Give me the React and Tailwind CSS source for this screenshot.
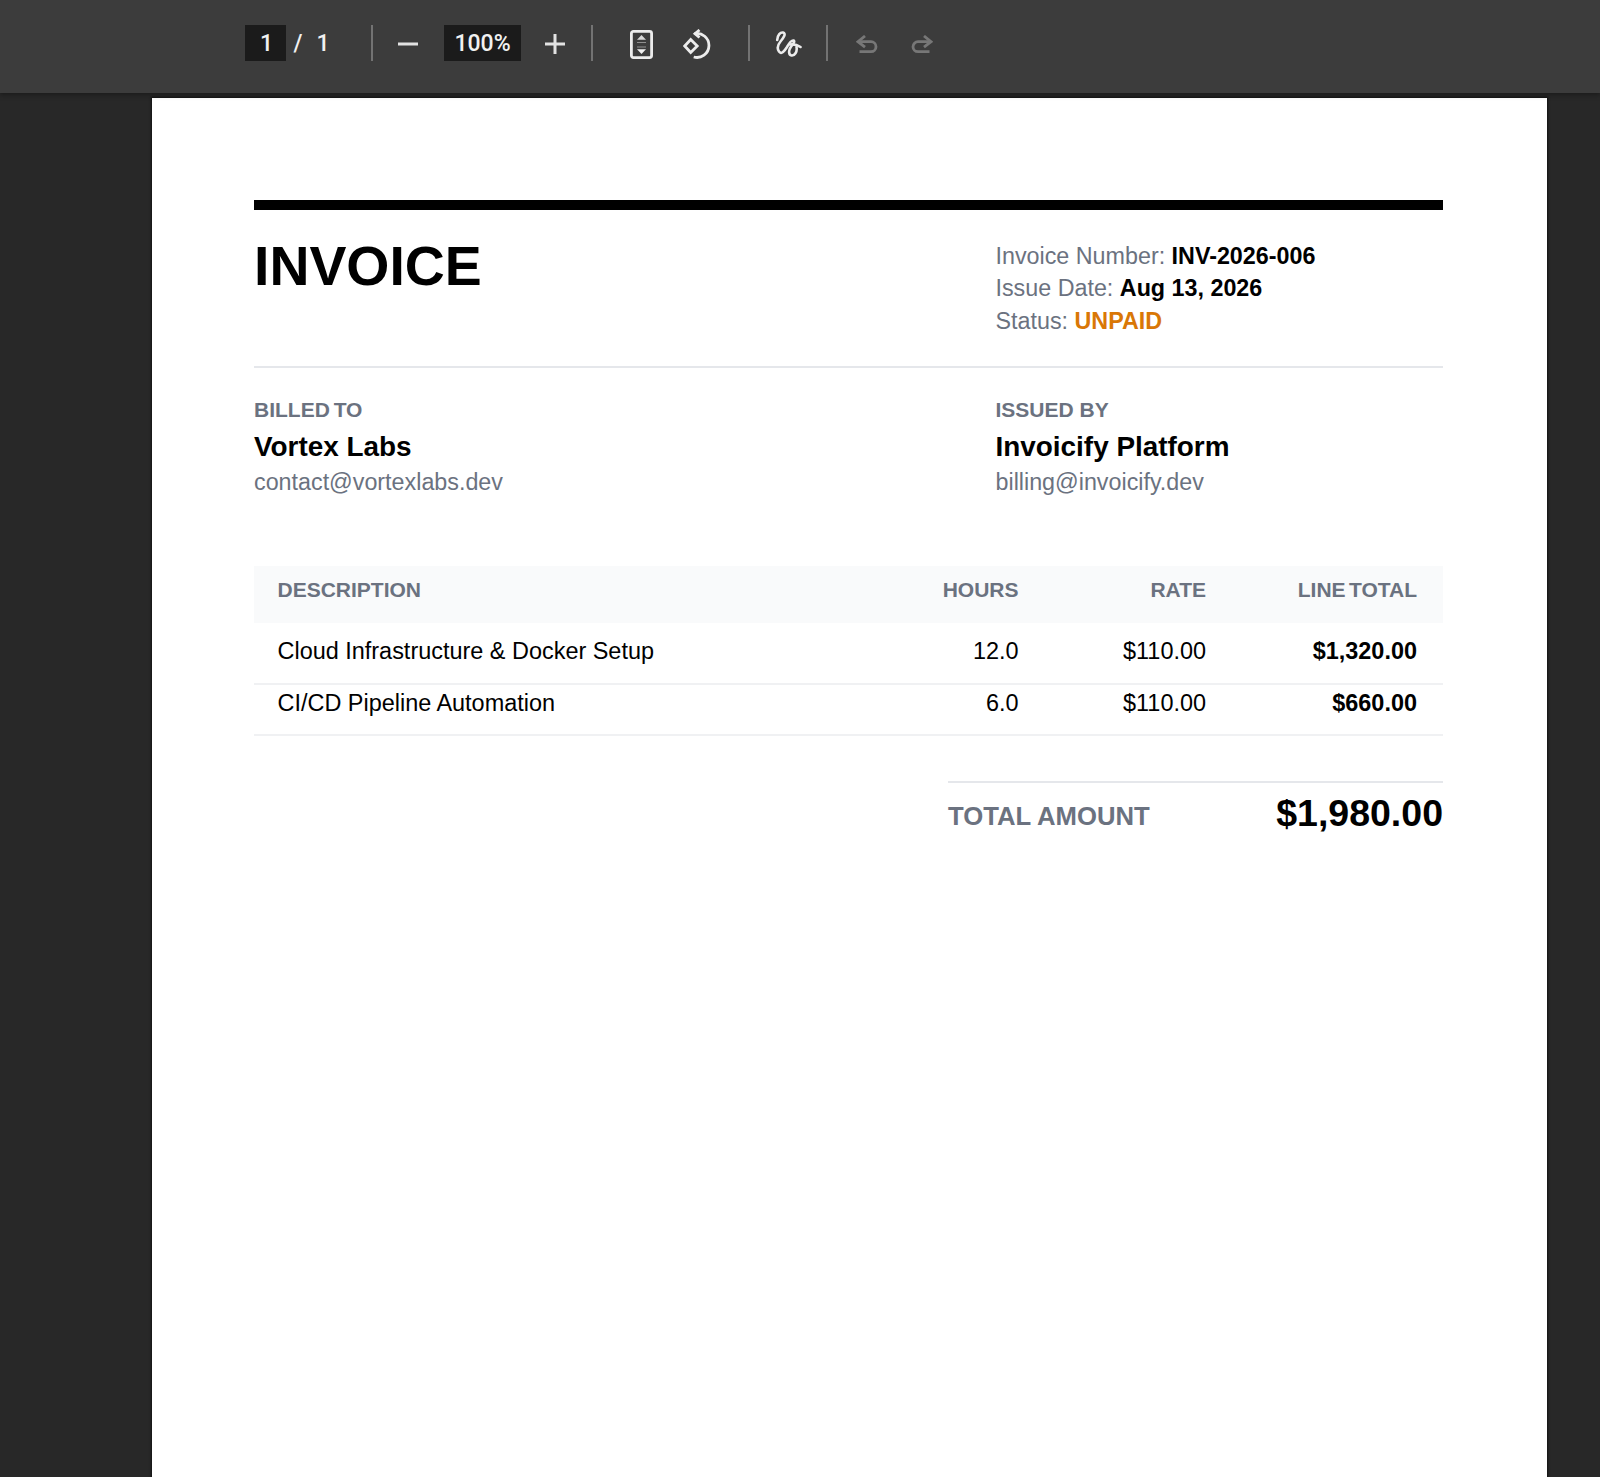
import React from "react";

const Sep = ({ className }) => <div className={`w-[2px] h-[36px] bg-[#737373] ${className}`} />;

const Toolbar = () => {
  return (
    <div className="relative z-10 h-[93px] shrink-0 bg-[#3c3c3c] shadow-[0_2px_5px_rgba(0,0,0,0.35)] flex items-center pb-[7px] pl-[245px] text-[#f1f1f1] font-['Roboto',sans-serif] font-medium text-[23px]">
      <div className="w-[41px] h-[36px] pt-[2px] pl-[2px] bg-[#1b1b1b] flex items-center justify-center">1</div>
      <span className="ml-[6px] w-[12px] pt-[2px] text-center">/</span>
      <span className="ml-[11px] w-[16px] pt-[2px] text-center">1</span>
      <Sep className="ml-[40px]" />

      <svg className="ml-[25px] mt-[2px]" width="20" height="20" viewBox="0 0 20 20">
        <path d="M0 10H20" stroke="#e2e2e2" strokeWidth="3" />
      </svg>
      <div className="ml-[26px] w-[77px] h-[36px] pt-[2px] bg-[#1b1b1b] flex items-center justify-center">100%</div>
      <svg className="ml-[24px] mt-[2px]" width="20" height="20" viewBox="0 0 20 20">
        <path d="M0 10H20M10 0V20" stroke="#e2e2e2" strokeWidth="3" />
      </svg>
      <Sep className="ml-[26px]" />

      {/* fit to page */}
      <svg className="ml-[37px] mt-[2px]" width="23" height="29" viewBox="0 0 23 29" fill="none">
        <rect x="1.4" y="1.4" width="20.2" height="26.2" rx="2" stroke="#ececec" strokeWidth="2.8" />
        <path d="M11.5 5L16 9.8H7Z" fill="#d8d8d8" />
        <path d="M11.5 24L16 19.2H7Z" fill="#f0f0f0" />
        <path d="M7 12.5H16M7 17H16" stroke="#8f8f8f" strokeWidth="1.2" />
      </svg>
      {/* rotate */}
      <svg className="ml-[30px] mt-[2px]" width="31" height="30" viewBox="0 0 31 30" fill="none" stroke="#ececec" strokeWidth="2.8">
        <path d="M7.7 10.5L14.2 17L7.7 23.5L1.7 17Z" />
        <path d="M11.5 4.7A12 12 0 1 1 10.7 28" />
        <path d="M16.5 1L12 4.7L16.5 8.5" />
      </svg>
      <Sep className="ml-[34px]" />

      {/* draw */}
      <svg className="ml-[25px] mt-[2px]" width="27" height="26" viewBox="0 0 26 26" fill="none" stroke="#ececec" strokeWidth="2.6" strokeLinecap="round">
        <path d="M1.7 9C2 4 5 1 7.5 1.5C11 2.5 8 7 5 10.5C2.5 13.5 1 17 3.5 20.5C6 24 9 20 11.5 16C14 11.5 16 9 18 9.5C20 10.5 17 13.5 15 16.5C13 19.5 13 24 16 24.5C19 25 22 21 21 16" />
        <path d="M14.5 13.5C18 13 22 14 25 16" />
      </svg>
      <Sep className="ml-[24px]" />

      {/* undo / redo */}
      <svg className="ml-[28px] mt-[3px]" width="22" height="20" viewBox="0 0 22 20" fill="none" stroke="#777777" strokeWidth="2.8">
        <path d="M9 1L2 6.7L9 12.2" />
        <path d="M2 6.7H15A5 5 0 0 1 15 16.7H3.5" />
      </svg>
      <svg className="ml-[33px] mt-[3px]" width="22" height="20" viewBox="0 0 22 20" fill="none" stroke="#777777" strokeWidth="2.8">
        <path d="M13 1L20 6.7L13 12.2" />
        <path d="M20 6.7H7A5 5 0 0 0 7 16.7H18.5" />
      </svg>
    </div>
  );
};

const rows = [
  { desc: "Cloud Infrastructure & Docker Setup", hours: "12.0", rate: "$110.00", total: "$1,320.00", cls: "pt-[13px] h-[62px]" },
  { desc: "CI/CD Pipeline Automation", hours: "6.0", rate: "$110.00", total: "$660.00", cls: "pt-[3px] h-[51px]" },
];

const App = () => {
  return (
    <div className="h-[1477px] overflow-hidden bg-[#282828] flex flex-col font-['Liberation_Sans',sans-serif]">
      <Toolbar />
      <div className="flex-1 min-h-0 pl-[152px] pr-[53px] pt-[5px]">
        <div className="h-full bg-white pl-[102px] pr-[104px] pt-[102px] text-black shadow-[0_0_2px_1px_#121212]">
          <div className="h-[10px] bg-black" />

          {/* Header */}
          <div className="grid grid-cols-[741.5px_1fr] pt-[30px] pb-[29px] border-b-2 border-[#e5e7eb]">
            <h1 className="text-[55.4px] leading-[52px] font-bold">INVOICE</h1>
            <div className="text-[23.3px] leading-[32.3px] text-[#6b7280]">
              <div>Invoice Number: <b className="text-black">INV-2026-006</b></div>
              <div>Issue Date: <b className="text-black">Aug 13, 2026</b></div>
              <div>Status: <b className="text-[#d97706]">UNPAID</b></div>
            </div>
          </div>

          {/* Parties */}
          <div className="grid grid-cols-[741.5px_1fr] pt-[28px] h-[198px]">
            <div>
              <div className="text-[21px] leading-[28px] font-bold text-[#6b7280] [word-spacing:-2px]">BILLED TO</div>
              <div className="mt-[6px] text-[27.9px] leading-[34px] font-bold">Vortex Labs</div>
              <div className="mt-[2px] text-[23.3px] leading-[32px] text-[#6b7280]">contact@vortexlabs.dev</div>
            </div>
            <div>
              <div className="text-[21px] leading-[28px] font-bold text-[#6b7280]">ISSUED BY</div>
              <div className="mt-[6px] text-[27.9px] leading-[34px] font-bold">Invoicify Platform</div>
              <div className="mt-[2px] text-[23.3px] leading-[32px] text-[#6b7280]">billing@invoicify.dev</div>
            </div>
          </div>

          {/* Table */}
          <div className="grid grid-cols-[1fr_120px_187.5px_211px] h-[57px] pt-[10px] pl-[23.5px] pr-[26px] bg-[#f9fafb] text-[21px] leading-[28px] font-bold text-[#6b7280]">
            <div>DESCRIPTION</div>
            <div className="text-right">HOURS</div>
            <div className="text-right">RATE</div>
            <div className="text-right [word-spacing:-2.5px]">LINE TOTAL</div>
          </div>
          {rows.map((r) => (
            <div key={r.desc} className={`grid grid-cols-[1fr_120px_187.5px_211px] pl-[23.5px] pr-[26px] border-b-2 border-[#f0f1f3] text-[23.45px] leading-[30px] ${r.cls}`}>
              <div>{r.desc}</div>
              <div className="text-right">{r.hours}</div>
              <div className="text-right">{r.rate}</div>
              <div className="text-right font-bold">{r.total}</div>
            </div>
          ))}

          {/* Total */}
          <div className="flex justify-end mt-[45px]">
            <div className="w-[495px] border-t-2 border-[#e5e7eb] flex justify-between items-center pt-[10px]">
              <span className="text-[25.7px] leading-[40px] font-bold text-[#6b7280] mt-[3px]">TOTAL AMOUNT</span>
              <span className="text-[37.5px] leading-[44px] font-bold -mt-[2px]">$1,980.00</span>
            </div>
          </div>
        </div>
      </div>
    </div>
  );
};

export default App;
